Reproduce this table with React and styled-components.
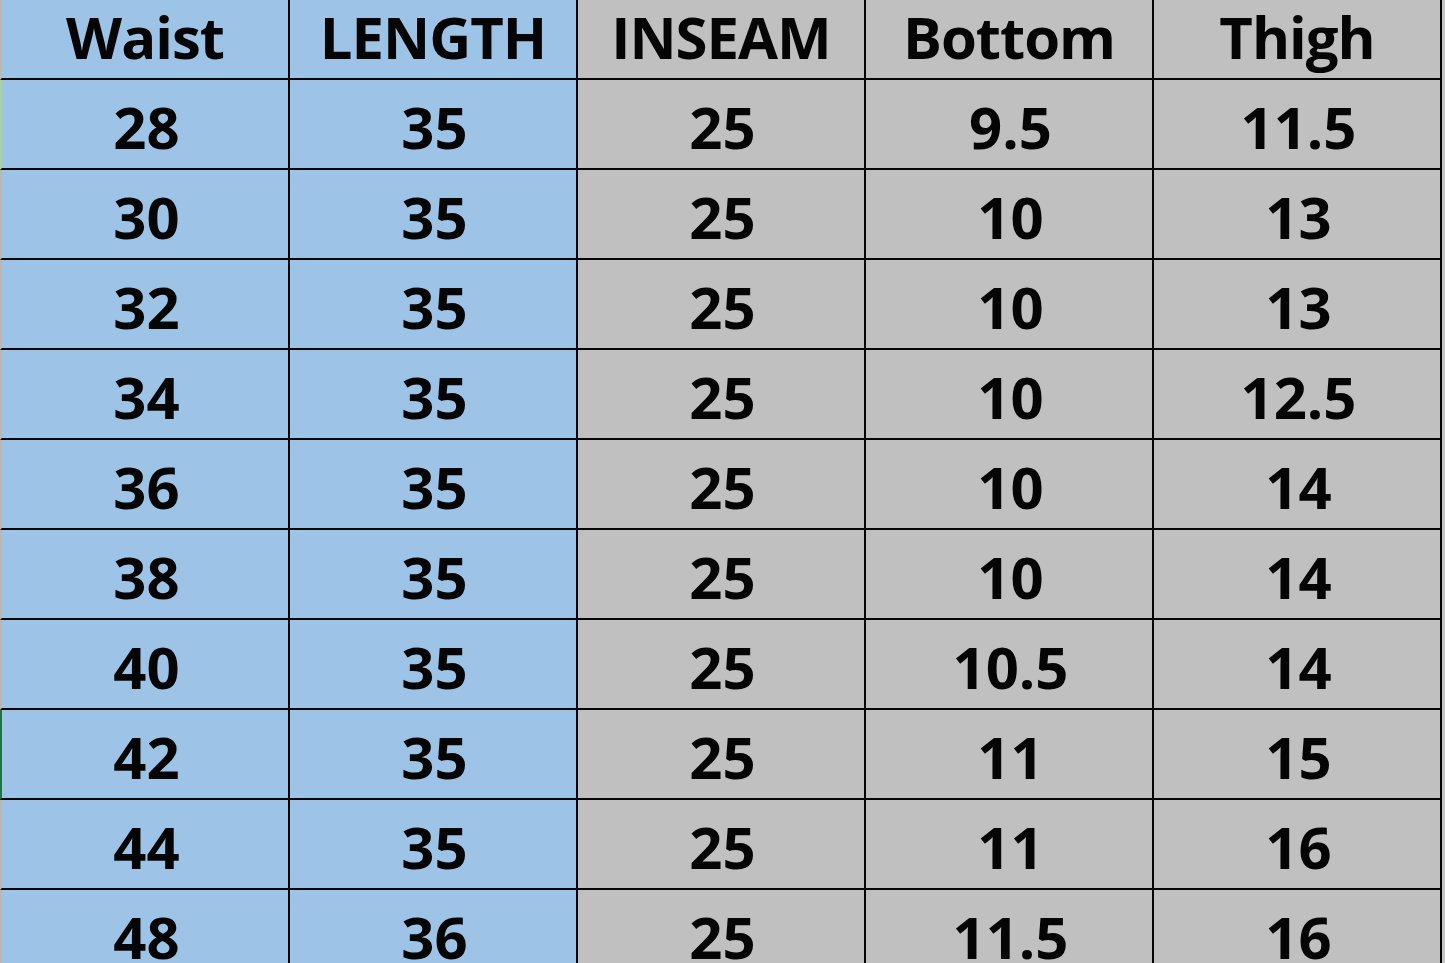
import React from 'react';
import styled, { createGlobalStyle } from 'styled-components';

const GlobalStyle = createGlobalStyle`
	html, body {
		margin: 0;
		padding: 0;
		background: #c6c6c6;
		overflow: hidden;
	}
	body {
		font-family: "Open Sans", "Liberation Sans", sans-serif;
	}
`;

const Sheet = styled.div`
	width: 1445px;
	height: 963px;
	overflow: hidden;
	background: #c6c6c6;
`;

const Wrap = styled.div`
	padding-left: 2px;
`;

const Grid = styled.div`
	display: grid;
	grid-template-columns: repeat(5, 288px);
	grid-template-rows: 80px;
	grid-auto-rows: 90px;
	width: max-content;
`;

const Cell = styled.div`
	box-sizing: border-box;
	display: flex;
	align-items: center;
	justify-content: center;
	padding: ${props => props.$head ? '0 0 4px 0' : '6px 0 0 3px'};
	background: ${props => props.$blue ? '#9dc3e6' : '#c0c0c0'};
	border-right: 2px solid #050505;
	border-bottom: 2px solid #050505;
	border-left: ${props => props.$edge ? `2px solid ${props.$edge}` : 'none'};
	width: ${props => props.$edge ? '290px' : '288px'};
	margin-left: ${props => props.$edge ? '-2px' : '0'};
	font-size: 58px;
	font-weight: 700;
	color: #050505;
	letter-spacing: ${props => props.$head ? '-1px' : '0'};
	line-height: 1;
	white-space: nowrap;
`;

const headers = ['Waist', 'LENGTH', 'INSEAM', 'Bottom', 'Thigh'];

const rows = [
	{ v: ['28', '35', '25', '9.5', '11.5'], edge: '#a6d2a0' },
	{ v: ['30', '35', '25', '10', '13'] },
	{ v: ['32', '35', '25', '10', '13'] },
	{ v: ['34', '35', '25', '10', '12.5'] },
	{ v: ['36', '35', '25', '10', '14'] },
	{ v: ['38', '35', '25', '10', '14'] },
	{ v: ['40', '35', '25', '10.5', '14'] },
	{ v: ['42', '35', '25', '11', '15'], edge: '#217346' },
	{ v: ['44', '35', '25', '11', '16'] },
	{ v: ['48', '36', '25', '11.5', '16'] },
];

export default function App() {
	return (
		<Sheet>
			<GlobalStyle />
			<Wrap>
				<Grid>
					{headers.map((h, i) => (
						<Cell key={h} $head $blue={i < 2} $edge={i === 0 ? '#b8b8b8' : null}>
							{h}
						</Cell>
					))}
					{rows.map((r, ri) =>
						r.v.map((val, ci) => (
							<Cell
								key={ri + '-' + ci}
								$blue={ci < 2}
								$edge={ci === 0 ? (r.edge || '#b8b8b8') : null}
							>
								{val}
							</Cell>
						))
					)}
				</Grid>
			</Wrap>
		</Sheet>
	);
}
